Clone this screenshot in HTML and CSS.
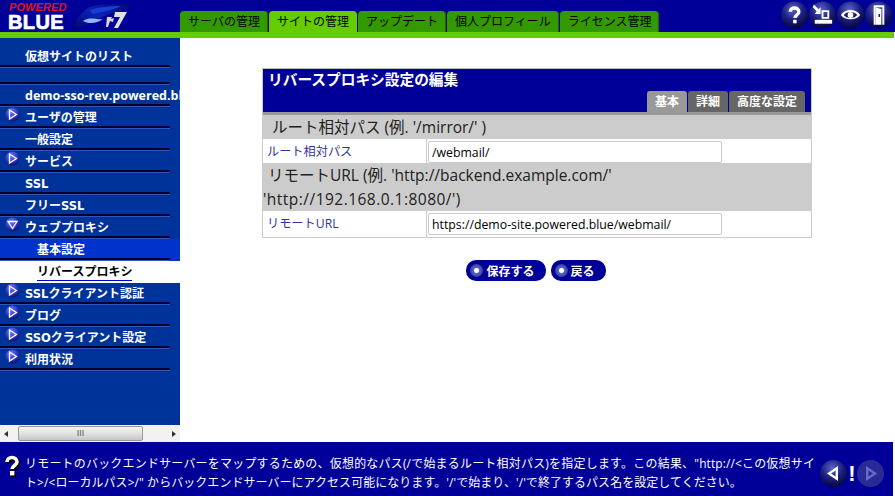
FILE: index.html
```html
<!DOCTYPE html>
<html lang="ja">
<head>
    <meta charset="UTF-8">
    <title>リバースプロキシ設定の編集</title>
    <link rel="stylesheet" href="styles.css">
</head>
<body>
    <svg class="defs" width="0" height="0">
        <defs>
            <radialGradient id="ball" cx="45%" cy="30%" r="70%">
                <stop offset="0" stop-color="#5a66c8"/>
                <stop offset="0.55" stop-color="#1c1f80"/>
                <stop offset="1" stop-color="#05053a"/>
            </radialGradient>
            <radialGradient id="bullet" cx="40%" cy="30%" r="75%">
                <stop offset="0" stop-color="#6f7dff"/>
                <stop offset="0.6" stop-color="#2a35c8"/>
                <stop offset="1" stop-color="#0a0a60"/>
            </radialGradient>
            <linearGradient id="swoosh" x1="0" y1="1" x2="1" y2="0">
                <stop offset="0" stop-color="#000066"/>
                <stop offset="0.5" stop-color="#0a24b0"/>
                <stop offset="1" stop-color="#03036c"/>
            </linearGradient>
            <symbol id="arrow-right" viewBox="0 0 15 15">
                <circle cx="7.5" cy="7.5" r="7" fill="url(#bullet)"/>
                <path d="M4.5 3 L11.5 7.5 L4.5 12 Z" fill="none" stroke="#fff" stroke-width="1.3"/>
            </symbol>
            <symbol id="arrow-down" viewBox="0 0 15 15">
                <circle cx="7.5" cy="7.5" r="7" fill="url(#bullet)"/>
                <path d="M3 4.5 L12 4.5 L7.5 11.5 Z" fill="none" stroke="#fff" stroke-width="1.3"/>
            </symbol>
        </defs>
    </svg>

    <div class="app">
        <header class="top">
            <div class="logo">
                <div class="logo-text">
                    <span class="logo-powered">POWERED</span>
                    <span class="logo-blue">BLUE</span>
                </div>
                <svg class="logo-mark" width="62" height="32" viewBox="0 0 62 32">
                    <path d="M0 31 C3 16 12 7 24 5 L61 3 C54 9 46 12 38 13 L14 24 Z" fill="url(#swoosh)"/>
                    <path d="M10 21 C17 16 23 20 30 19 C24 24 15 24 10 21 Z" fill="#8fb4ff"/>
                    <path d="M17 10 C23 8 34 6 48 6 C40 10 28 12 20 14 Z" fill="#1c3cd8"/>
                    <path d="M34 17 L39 17 L38 19 L41 18 L40 22 L37 21 L35 27 L33 27 Z" fill="#d8d8d8"/>
                    <path d="M42 12 L54 12 L45 28 L41 28 L47 17 L41 17 Z" fill="#e0e0e0"/>
                </svg>
            </div>
            <nav class="tabs">
                <a class="tab">サーバの管理</a>
                <a class="tab tab-on">サイトの管理</a>
                <a class="tab">アップデート</a>
                <a class="tab">個人プロフィール</a>
                <a class="tab">ライセンス管理</a>
            </nav>
            <div class="tools">
                <svg class="tool" viewBox="0 0 28 28">
                    <circle cx="14" cy="14" r="14" fill="url(#ball)"/>
                    <path d="M9.5 10.5 C9.5 5.5 18.5 5.5 18.5 10.5 C18.5 14 14.5 14 14.5 17" fill="none" stroke="#fff" stroke-width="3.4"/>
                    <rect x="12.6" y="19" width="3.6" height="3.6" fill="#fff"/>
                </svg>
                <svg class="tool" viewBox="0 0 28 28">
                    <circle cx="14" cy="14" r="14" fill="url(#ball)"/>
                    <path d="M5 3 L10 8 L12 6 L12 13 L6 13 L8 10 L4 6 Z" fill="#fff"/>
                    <path d="M13 9 H21 V18 H13 Z M15 11 V16 H19 V11 Z" fill="#fff"/>
                    <rect x="6" y="19" width="18" height="4" fill="#fff"/>
                </svg>
                <svg class="tool" viewBox="0 0 28 28">
                    <circle cx="14" cy="14" r="14" fill="url(#ball)"/>
                    <path d="M4 14 C8 7 20 7 24 14 C20 20 8 20 4 14 Z" fill="#fff"/>
                    <path d="M7 14 C10 10 18 10 21 14 C18 18 10 18 7 14 Z" fill="#14166e"/>
                    <circle cx="14" cy="14" r="3" fill="#fff"/>
                </svg>
                <svg class="tool" viewBox="0 0 28 28">
                    <circle cx="14" cy="14" r="14" fill="url(#ball)"/>
                    <path d="M9 4 H20 V24 H18 V6 H11 V24 H9 Z" fill="#fff"/>
                    <path d="M11 6 L17 8 V24 H11 Z" fill="#fff"/>
                    <rect x="14" y="13" width="1.6" height="3" fill="#14166e"/>
                </svg>
            </div>
        </header>
        <div class="greenbar"></div>

        <div class="middle">
            <aside class="side">
                <ul class="menu">
                    <li class="item item-first">仮想サイトのリスト</li>
                    <li class="item item-empty"></li>
                    <li class="item item-host">demo-sso-rev.powered.blue</li>
                    <li class="item"><svg class="bullet"><use href="#arrow-right"/></svg>ユーザの管理</li>
                    <li class="item">一般設定</li>
                    <li class="item"><svg class="bullet"><use href="#arrow-right"/></svg>サービス</li>
                    <li class="item"><b class="lat">SSL</b></li>
                    <li class="item">フリー<b class="lat">SSL</b></li>
                    <li class="item"><svg class="bullet"><use href="#arrow-down"/></svg>ウェブプロキシ</li>
                    <li class="item sub">基本設定</li>
                    <li class="item sub sub-on"><span>リバースプロキシ</span></li>
                    <li class="item"><svg class="bullet"><use href="#arrow-right"/></svg><b class="lat">SSL</b>クライアント認証</li>
                    <li class="item"><svg class="bullet"><use href="#arrow-right"/></svg>ブログ</li>
                    <li class="item"><svg class="bullet"><use href="#arrow-right"/></svg><b class="lat">SSO</b>クライアント設定</li>
                    <li class="item"><svg class="bullet"><use href="#arrow-right"/></svg>利用状況</li>
                </ul>
                <div class="hscroll">
                    <span class="arrow arrow-left"></span>
                    <div class="thumb">III</div>
                    <span class="arrow arrow-right"></span>
                </div>
            </aside>

            <main class="content">
                <div class="panel">
                    <div class="panel-head">
                        <h1>リバースプロキシ設定の編集</h1>
                        <div class="subtabs">
                            <a class="subtab subtab-on">基本</a>
                            <a class="subtab">詳細</a>
                            <a class="subtab">高度な設定</a>
                        </div>
                    </div>
                    <div class="section section-first">ルート相対パス (例. '/mirror/' )</div>
                    <div class="row">
                        <label class="row-label">ルート相対パス</label>
                        <div class="row-field"><input type="text" value="/webmail/"></div>
                    </div>
                    <div class="section section-url">リモートURL (例. 'http://backend.example.com/'<br><span class="wrapped">'http://192.168.0.1:8080/')</span></div>
                    <div class="row">
                        <label class="row-label">リモートURL</label>
                        <div class="row-field"><input type="text" value="https://demo-site.powered.blue/webmail/"></div>
                    </div>
                </div>
                <div class="actions">
                    <button type="button"><i></i>保存する</button>
                    <button type="button"><i></i>戻る</button>
                </div>
            </main>
        </div>

        <footer class="help">
            <svg class="help-mark" width="18" height="24" viewBox="0 0 18 24">
                <path d="M4 8 C4 2 14 2 14 8 C14 11 10 12 9.5 15" fill="none" stroke="#000" stroke-width="4" transform="translate(1.5 1.5)"/>
                <rect x="8.5" y="18.5" width="4.5" height="4.5" fill="#000"/>
                <path d="M4 8 C4 2 14 2 14 8 C14 11 9 12 9 15" fill="none" stroke="#fff" stroke-width="3.6"/>
                <rect x="7" y="17" width="4.4" height="4.4" fill="#fff"/>
            </svg>
            <p>リモートのバックエンドサーバーをマップするための、仮想的なパス(/で始まるルート相対パス)を指定します。この結果、"http://&lt;この仮想サイト&gt;/&lt;ローカルパス&gt;/" からバックエンドサーバーにアクセス可能になります。'/'で始まり、'/'で終了するパス名を設定してください。</p>
            <div class="help-nav">
                <svg width="27" height="27" viewBox="0 0 27 27">
                    <circle cx="13.5" cy="13.5" r="13.5" fill="url(#ball)"/>
                    <path d="M18 6 V21 L7 13.5 Z M15.6 10.5 L11 13.5 L15.6 16.5 Z" fill="#fff" fill-rule="evenodd"/>
                </svg>
                <span class="bang">!</span>
                <svg width="27" height="27" viewBox="0 0 27 27">
                    <circle cx="13.5" cy="13.5" r="13.5" fill="#2a2a96"/>
                    <path d="M9 6 V21 L20 13.5 Z M11.4 10.5 L16 13.5 L11.4 16.5 Z" fill="#6a6ac8" fill-rule="evenodd"/>
                </svg>
            </div>
        </footer>
    </div>
</body>
</html>
```

FILE: styles.css
```css
* { box-sizing: border-box; }
html, body { margin: 0; padding: 0; height: 100%; overflow: hidden; }
body {
    font-family: "Open Sans", "Noto Sans CJK JP", sans-serif;
    background-color: #fff;
}
.defs { display: block; height: 0; }
.app {
    display: flex;
    flex-direction: column;
    height: 496px;
    width: 895px;
}

/* header */
.top {
    display: flex;
    height: 32px;
    background-color: #000099;
}
.logo {
    display: flex;
    width: 180px;
    padding-left: 8px;
    overflow: hidden;
}
.logo-text {
    display: flex;
    flex-direction: column;
    width: 65px;
}
.logo-powered {
    color: #e01020;
    font: italic bold 11px/11px "Liberation Sans", sans-serif;
    letter-spacing: 0.1px;
    padding: 2px 0 0 1px;
    height: 13px;
}
.logo-blue {
    color: #fff;
    font: bold 20px/18px "Liberation Sans", sans-serif;
    letter-spacing: 0.4px;
    -webkit-text-stroke: 0.7px #fff;
}
.tabs {
    display: flex;
    align-items: flex-end;
    height: 32px;
    gap: 1px;
}
.tab {
    height: 21px;
    padding: 0 8px;
    background-color: #339900;
    border-radius: 4px 4px 0 0;
    box-shadow: inset -1px 0 #226600;
    color: #000;
    font-size: 12px;
    line-height: 21px;
    white-space: nowrap;
}
.tab-on { background-color: #66cc00; box-shadow: none; }
.tools {
    display: flex;
    gap: 1px;
    margin-left: auto;
    padding: 0 3px 0 0;
}
.tool { width: 27px; height: 28px; margin-top: 1px; }
.greenbar { height: 6px; background-color: #66cc00; margin-right: 1px; }

/* side menu */
.middle { display: flex; flex: 1; min-height: 0; }
.side {
    display: flex;
    flex-direction: column;
    width: 180px;
    background-color: #003399;
}
.menu {
    list-style: none;
    margin: 0;
    padding: 0;
    flex: 1;
    overflow: hidden;
}
.item {
    position: relative;
    height: 22px;
    padding-left: 25px;
    color: #fff;
    font-size: 12px;
    font-weight: 700;
    line-height: 21px;
    white-space: nowrap;
    overflow: hidden;
}
.item::after {
    content: "";
    position: absolute;
    left: 0;
    bottom: 0;
    width: 170px;
    height: 2px;
    background-color: #000033;
    border-bottom: 1px solid #3355bb;
}
.item-first { height: 30px; line-height: 37px; }
.item-empty { height: 17px; }
.item-host { font-size: 12.5px; }
.lat { font-family: "DejaVu Sans", sans-serif; font-size: 11.5px; }
.bullet {
    position: absolute;
    left: 5px;
    top: 0;
    width: 15px;
    height: 15px;
}
.sub { padding-left: 37px; background-color: #0033cc; }
.sub-on { background-color: #fff; color: #000; }
.sub-on span { border-bottom: 1px solid #0000cc; }
.sub-on::after { display: none; }

/* scrollbar */
.hscroll {
    display: flex;
    align-items: center;
    justify-content: space-between;
    height: 17px;
    padding: 0 4px;
    background-color: #f2f2f2;
    flex: none;
}
.arrow { width: 0; height: 0; border-style: solid; border-width: 3.5px 0; border-color: transparent; }
.arrow-left { border-right: 4px solid #333; }
.arrow-right { border-left: 4px solid #333; }
.thumb {
    width: 125px;
    height: 15px;
    margin: 0 auto 0 10px;
    border: 1px solid #989898;
    border-radius: 2px;
    background: linear-gradient(#f4f4f4, #e2e2e2 50%, #c6c6c6);
    color: #555;
    font: 9px/13px "Liberation Sans", sans-serif;
    text-align: center;
}

/* edit panel */
.content {
    flex: 1;
    padding: 30px 83px 0 82px;
}
.panel {
    border: 1px solid #cccccc;
    border-top-color: #bbbbbb;
}
.panel-head {
    display: flex;
    flex-direction: column;
    justify-content: space-between;
    height: 46px;
    background-color: #000099;
    border-bottom: 3px solid #999999;
}
.panel-head h1 {
    margin: 0;
    padding: 0 0 0 5px;
    color: #fff;
    font-size: 14.7px;
    font-weight: 700;
    line-height: 21px;
}
.subtabs {
    display: flex;
    justify-content: flex-end;
    gap: 1px;
    padding-right: 6px;
}
.subtab {
    height: 21px;
    padding: 0 8px;
    background-color: #666666;
    border-radius: 3px 3px 0 0;
    color: #fff;
    font-size: 12px;
    font-weight: 700;
    line-height: 21px;
}
.subtab-on { background-color: #999999; }
.section {
    background-color: #cccccc;
    color: #222;
    font-size: 15.5px;
}
.section-first { height: 24px; padding-left: 9px; line-height: 24px; }
.section-url { height: 47px; padding-left: 5px; line-height: 23.5px; }
.wrapped { margin-left: -5px; letter-spacing: 0.47px; }
.row { display: flex; height: 25px; border-bottom: 1px solid #cccccc; }
.row:last-child { height: 26px; border-bottom: 0; }
.row-label {
    width: 164px;
    padding-left: 4px;
    border-right: 1px solid #cccccc;
    color: #333399;
    font-size: 12.2px;
    line-height: 25px;
}
.row-field { flex: 1; padding: 2px 0 0 1px; }
.row-field input {
    display: block;
    width: 294px;
    height: 22px;
    padding: 0 3px;
    border: 1px solid #c8ccd4;
    border-radius: 2px;
    color: #000;
    font: 12.3px "Open Sans", "Noto Sans CJK JP", sans-serif;
}

/* buttons */
.actions {
    display: flex;
    justify-content: center;
    gap: 5px;
    margin-top: 22px;
    padding-right: 2px;
}
.actions button {
    display: flex;
    align-items: center;
    height: 21px;
    padding: 0 11px 0 4px;
    border: 0;
    border-radius: 10px;
    background-color: #000099;
    color: #fff;
    font: 700 12px "Open Sans", "Noto Sans CJK JP", sans-serif;
    cursor: pointer;
}
.actions i {
    width: 13px;
    height: 13px;
    margin-right: 3px;
    border-radius: 50%;
    background: radial-gradient(circle, #fff 0 2px, #5a66c8 3px, #1c1f80 100%);
}

/* help bar */
.help {
    display: flex;
    align-items: center;
    height: 54px;
    margin-right: 2px;
    padding-top: 8px;
    background-color: #000099;
    color: #fff;
    flex: none;
}
.help-mark { flex: none; margin: 0 4px 14px 3px; }
.help p {
    width: 790px;
    margin: 0 5px 0 0;
    font-size: 11.95px;
    letter-spacing: 0.105px;
    line-height: 19px;
    text-align: justify;
    flex: none;
}
.help-nav { display: flex; align-items: center; }
.bang {
    width: 10px;
    color: #fff;
    font: bold 22px/27px "Liberation Sans", sans-serif;
    text-align: center;
}
```
